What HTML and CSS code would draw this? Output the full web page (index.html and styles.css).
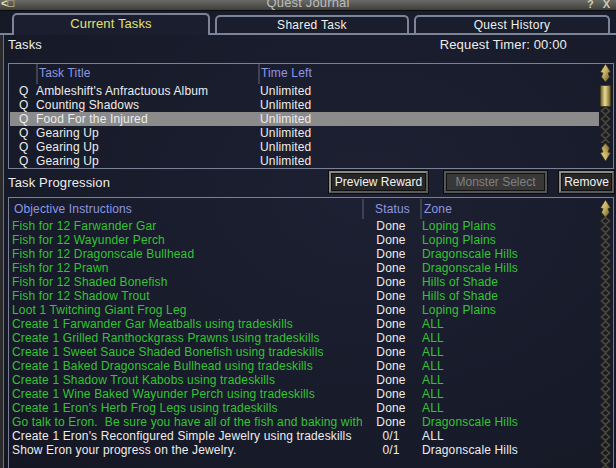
FILE: index.html
```html
<!DOCTYPE html>
<html lang="en">
<head>
  <meta charset="UTF-8" />
  <title>Quest Journal</title>
  <link rel="stylesheet" href="styles.css">
</head>
<body>

<div class="window">
  <div class="titlebar">
    <span class="title-icon">&lt;&#9633;</span>
    <span class="title">Quest Journal</span>
    <span class="title-btns">? X</span>
  </div>

  <div class="tabs">
    <div class="tab tab-current active">Current Tasks</div>
    <div class="tab tab-shared">Shared Task</div>
    <div class="tab tab-history">Quest History</div>
  </div>

  <div class="panel">
    <div class="toprow">
      <span>Tasks</span>
      <span class="timer">Request Timer: 00:00</span>
    </div>

    <div class="listbox tasks">
      <div class="list">
        <div class="task-row head">
          <span></span>
          <span class="hcell">Task Title</span>
          <span class="hcell">Time Left</span>
        </div>
        <div class="task-row"><span class="q">Q</span><span>Ambleshift's Anfractuous Album</span><span>Unlimited</span></div>
        <div class="task-row"><span class="q">Q</span><span>Counting Shadows</span><span>Unlimited</span></div>
        <div class="task-row selected"><span class="q">Q</span><span>Food For the Injured</span><span>Unlimited</span></div>
        <div class="task-row"><span class="q">Q</span><span>Gearing Up</span><span>Unlimited</span></div>
        <div class="task-row"><span class="q">Q</span><span>Gearing Up</span><span>Unlimited</span></div>
        <div class="task-row"><span class="q">Q</span><span>Gearing Up</span><span>Unlimited</span></div>
      </div>
      <div class="scrollbar">
        <svg class="arrow" width="13" height="18" viewBox="0 0 13 18"><use href="#arrowUp"/></svg>
        <svg class="thumb" width="11" height="22" viewBox="0 0 11 22"><rect x="0.5" y="0.5" width="10" height="21" rx="1" fill="url(#goldH)" stroke="#4a3f1c"/></svg>
        <svg class="chain" width="13" height="36"><rect width="13" height="36" fill="url(#chainPat)"/></svg>
        <svg class="arrow down" width="13" height="18" viewBox="0 0 13 18"><use href="#arrowUp"/></svg>
      </div>
    </div>

    <div class="progress-row">
      <span>Task Progression</span>
      <div class="buttons">
        <button class="btn btn-preview">Preview Reward</button>
        <button class="btn btn-monster" disabled>Monster Select</button>
        <button class="btn btn-remove">Remove</button>
      </div>
    </div>

    <div class="listbox objectives">
      <div class="list">
        <div class="obj-row head">
          <span class="hcell first">Objective Instructions</span>
          <span class="hcell center">Status</span>
          <span class="hcell">Zone</span>
        </div>
        <div class="obj-row done"><span>Fish for 12 Farwander Gar</span><span class="st">Done</span><span>Loping Plains</span></div>
        <div class="obj-row done"><span>Fish for 12 Wayunder Perch</span><span class="st">Done</span><span>Loping Plains</span></div>
        <div class="obj-row done"><span>Fish for 12 Dragonscale Bullhead</span><span class="st">Done</span><span>Dragonscale Hills</span></div>
        <div class="obj-row done"><span>Fish for 12 Prawn</span><span class="st">Done</span><span>Dragonscale Hills</span></div>
        <div class="obj-row done"><span>Fish for 12 Shaded Bonefish</span><span class="st">Done</span><span>Hills of Shade</span></div>
        <div class="obj-row done"><span>Fish for 12 Shadow Trout</span><span class="st">Done</span><span>Hills of Shade</span></div>
        <div class="obj-row done"><span>Loot 1 Twitching Giant Frog Leg</span><span class="st">Done</span><span>Loping Plains</span></div>
        <div class="obj-row done"><span>Create 1 Farwander Gar Meatballs using tradeskills</span><span class="st">Done</span><span>ALL</span></div>
        <div class="obj-row done"><span>Create 1 Grilled Ranthockgrass Prawns using tradeskills</span><span class="st">Done</span><span>ALL</span></div>
        <div class="obj-row done"><span>Create 1 Sweet Sauce Shaded Bonefish using tradeskills</span><span class="st">Done</span><span>ALL</span></div>
        <div class="obj-row done"><span>Create 1 Baked Dragonscale Bullhead using tradeskills</span><span class="st">Done</span><span>ALL</span></div>
        <div class="obj-row done"><span>Create 1 Shadow Trout Kabobs using tradeskills</span><span class="st">Done</span><span>ALL</span></div>
        <div class="obj-row done"><span>Create 1 Wine Baked Wayunder Perch using tradeskills</span><span class="st">Done</span><span>ALL</span></div>
        <div class="obj-row done"><span>Create 1 Eron's Herb Frog Legs using tradeskills</span><span class="st">Done</span><span>ALL</span></div>
        <div class="obj-row done"><span>Go talk to Eron.&nbsp; Be sure you have all of the fish and baking with</span><span class="st">Done</span><span>Dragonscale Hills</span></div>
        <div class="obj-row"><span>Create 1 Eron's Reconfigured Simple Jewelry using tradeskills</span><span class="st">0/1</span><span>ALL</span></div>
        <div class="obj-row"><span>Show Eron your progress on the Jewelry.</span><span class="st">0/1</span><span>Dragonscale Hills</span></div>
      </div>
      <div class="scrollbar">
        <svg class="arrow" width="13" height="18" viewBox="0 0 13 18"><use href="#arrowUp"/></svg>
        <svg class="chain" width="13" height="260"><rect width="13" height="260" fill="url(#chainPat)"/></svg>
      </div>
    </div>
  </div>
</div>

<svg width="0" height="0" class="defs">
  <defs>
    <linearGradient id="goldV" x1="0" y1="0" x2="1" y2="1">
      <stop offset="0" stop-color="#f4e6a8"/>
      <stop offset="0.5" stop-color="#c2ab5c"/>
      <stop offset="1" stop-color="#5e5024"/>
    </linearGradient>
    <linearGradient id="goldH" x1="0" y1="0" x2="1" y2="0">
      <stop offset="0" stop-color="#6c5c28"/>
      <stop offset="0.45" stop-color="#eadb94"/>
      <stop offset="1" stop-color="#6c5c28"/>
    </linearGradient>
    <symbol id="arrowUp" viewBox="0 0 13 18">
      <path d="M6.5 0 L11.5 8 L9 9 L10.5 13 L6.5 18 L2.5 13 L4 9 L1.5 8 Z" fill="url(#goldV)" stroke="#3e3415" stroke-width="0.6"/>
    </symbol>
    <pattern id="chainPat" width="13" height="8" patternUnits="userSpaceOnUse">
      <path d="M6.5 0.5 L10.5 4 L6.5 7.5 L2.5 4 Z" fill="none" stroke="#4d4833" stroke-width="1.6"/>
    </pattern>
  </defs>
</svg>

</body>
</html>
```

FILE: styles.css
```css
body {
  margin: 0;
  background: #000;
  font-family: 'Liberation Sans', Arial, sans-serif;
  font-size: 12px;
  letter-spacing: 0.15px;
  color: #ededed;
}

.defs {
  position: absolute;
}

.window {
  width: 616px;
  height: 468px;
  overflow: hidden;
  display: flex;
  flex-direction: column;
  background: radial-gradient(ellipse at 60% 40%, #1d2032 0%, #171a28 70%, #141622 100%);
}

/* title bar */
.titlebar {
  height: 10px;
  display: flex;
  align-items: flex-start;
  justify-content: center;
  overflow: hidden;
  position: relative;
  background: linear-gradient(#6a6a66, #3e3e3c);
  border-bottom: 1px solid #0c0c0c;
}

.title {
  font-size: 13px;
  line-height: 13px;
  margin-top: -4px;
  color: #bdbdbd;
}

.title-icon {
  position: absolute;
  left: 1px;
  top: -3px;
  font-size: 11px;
  font-weight: bold;
  color: #e8e2b8;
}

.title-btns {
  position: absolute;
  right: 3px;
  top: -2px;
  font-size: 11px;
  font-weight: bold;
  letter-spacing: 3px;
  color: #d0ccb0;
}

/* tabs */
.tabs {
  height: 22px;
  display: flex;
  align-items: flex-end;
  padding-left: 12px;
  gap: 5px;
  position: relative;
  z-index: 2;
}

.tab {
  box-sizing: border-box;
  height: 18px;
  border: 2px solid #7c8498;
  border-bottom: none;
  border-radius: 5px 5px 0 0;
  background: #1a1d2c;
  text-align: center;
  line-height: 17px;
  font-size: 12px;
  letter-spacing: 0.3px;
  color: #f0f0f0;
}

.tab.active {
  height: 22px;
  margin-bottom: -2px;
  line-height: 18px;
  font-size: 13px;
  letter-spacing: 0.1px;
  color: #e2e070;
  background: #1b1e2e;
}

.tab-current { width: 198px; }
.tab-shared { width: 194px; }
.tab-history { width: 196px; }

/* panel */
.panel {
  flex: 1;
  border-top: 2px solid #7c8498;
  padding: 0 2px 0 8px;
  box-shadow: inset 3px 0 0 #2a2a2c, inset 4px 0 0 #6d7282;
  display: flex;
  flex-direction: column;
  min-height: 0;
}

.toprow {
  display: flex;
  justify-content: space-between;
  height: 18px;
  line-height: 18px;
  padding-top: 1px;
  font-size: 13px;
}

.timer {
  margin-right: 47px;
}

.listbox {
  display: flex;
  border: 1px solid #7a8196;
  overflow: hidden;
}

.list {
  flex: 1;
  min-width: 0;
}

.listbox.tasks {
  margin-top: 9px;
  height: 104px;
  flex-shrink: 0;
}

.head {
  height: 20px;
  line-height: 18px;
  color: #8c98e4;
}

.hcell {
  border-left: 2px solid #3e4252;
  padding-left: 1px;
}

.task-row {
  display: grid;
  grid-template-columns: 26px 222px 1fr;
  height: 14px;
  line-height: 14px;
  white-space: nowrap;
  margin-left: 1px;
}

.task-row.head {
  height: 20px;
  line-height: 18px;
}

.task-row .q {
  padding-left: 9px;
}

.task-row span:nth-child(3) {
  padding-left: 2px;
}

.task-row.head .hcell:nth-child(3) {
  padding-left: 1px;
}

.task-row.selected {
  background: #8b8b8b;
}

/* scrollbars */
.scrollbar {
  width: 13px;
  flex-shrink: 0;
  display: flex;
  flex-direction: column;
  align-items: center;
  padding: 0 1px 0 0;
}

.scrollbar svg {
  display: block;
}

.tasks .thumb {
  margin-top: 3px;
}

.arrow.down {
  transform: scaleY(-1);
  margin-top: 0;
}

/* progression row */
.progress-row {
  display: flex;
  justify-content: space-between;
  align-items: center;
  height: 22px;
  margin-top: 2px;
  font-size: 13px;
}

.buttons {
  display: flex;
}

.btn {
  box-sizing: border-box;
  height: 22px;
  padding: 0;
  font-family: 'Liberation Sans', Arial, sans-serif;
  font-size: 12px;
  letter-spacing: 0;
  color: #f2f2f2;
  background: #262626;
  border: 2px solid #8a8a88;
  border-right-color: #5a5a58;
  border-bottom-color: #5a5a58;
  box-shadow: 0 0 0 1px #0c0c0c, inset 0 0 0 1px #111;
}

.btn-preview { width: 99px; }
.btn-monster { width: 103px; margin-left: 16px; color: #808080; background: #383838; border-color: #555; }
.btn-remove { width: 55px; margin-left: 12px; }

/* objectives */
.listbox.objectives {
  margin-top: 4px;
  flex: 1;
  border-bottom: none;
}

.obj-row {
  display: grid;
  grid-template-columns: 353px 58px 1fr;
  height: 14px;
  line-height: 14px;
  white-space: nowrap;
}

.obj-row > span {
  overflow: hidden;
}

.obj-row > span:first-child {
  padding-left: 3px;
}

.obj-row.head {
  box-sizing: border-box;
  height: 21px;
  line-height: 20px;
  padding-top: 1px;
}

.obj-row.head .hcell.first {
  border-left: none;
  padding-left: 5px;
}

.obj-row .st {
  text-align: center;
}

.obj-row .hcell.center {
  text-align: center;
}

.obj-row span:nth-child(3) {
  padding-left: 2px;
}

.obj-row.done span:nth-child(1),
.obj-row.done span:nth-child(3) {
  color: #35c335;
}

.objectives .scrollbar {
  padding-top: 2px;
}
```
